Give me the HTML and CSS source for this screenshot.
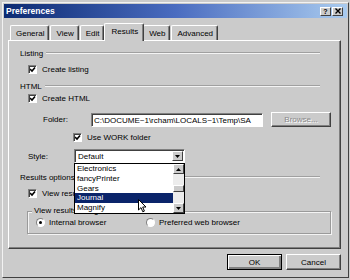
FILE: index.html
```html
<!DOCTYPE html>
<html lang="en">
<head>
  <meta charset="UTF-8">
  <title>Preferences</title>
  <link rel="stylesheet" href="styles.css">
</head>
<body>
  <div class="dialog">
    <!-- Title bar -->
    <div class="titlebar">
      <span class="title">Preferences</span>
      <div class="title-btns">
        <span class="tbtn">?</span>
        <span class="tbtn">
          <svg width="6" height="6" viewBox="0 0 6 6"><path d="M0.5 0.5 L5.5 5.5 M5.5 0.5 L0.5 5.5" stroke="#000" stroke-width="1.4"/></svg>
        </span>
      </div>
    </div>

    <!-- Tabs -->
    <div class="tabs">
      <div class="tab">General</div>
      <div class="tab">View</div>
      <div class="tab">Edit</div>
      <div class="tab active">Results</div>
      <div class="tab">Web</div>
      <div class="tab">Advanced</div>
    </div>

    <!-- Results page -->
    <div class="panel">
      <div class="section s-listing"><span>Listing</span><i class="rule"></i></div>
      <div class="check-row r-create-listing"><span class="box checked"></span>Create listing</div>

      <div class="section s-html"><span>HTML</span><i class="rule"></i></div>
      <div class="check-row r-create-html"><span class="box checked"></span>Create HTML</div>

      <div class="field-row r-folder">
        <span class="folder-label">Folder:</span>
        <span class="textbox">C:\DOCUME~1\rcham\LOCALS~1\Temp\SA</span>
        <span class="btn disabled browse">Browse...</span>
      </div>

      <div class="check-row r-work"><span class="box checked"></span>Use WORK folder</div>

      <div class="field-row r-style">
        <span class="style-label">Style:</span>
        <div class="select-wrap">
          <div class="select">
            <span class="select-text">Default</span>
            <span class="arrow-btn"><svg width="5" height="3" viewBox="0 0 5 3"><polygon points="0,0 5,0 2.5,3" fill="#000"/></svg></span>
          </div>
          <div class="droplist">
            <div class="items">
              <div class="item">Electronics</div>
              <div class="item">fancyPrinter</div>
              <div class="item">Gears</div>
              <div class="item selected">Journal</div>
              <div class="item">Magnify</div>
            </div>
            <div class="scrollbar">
              <span class="arrow-btn"><svg width="5" height="3" viewBox="0 0 5 3"><polygon points="0,3 5,3 2.5,0" fill="#000"/></svg></span>
              <span class="track"><span class="thumb"></span></span>
              <span class="arrow-btn"><svg width="5" height="3" viewBox="0 0 5 3"><polygon points="0,0 5,0 2.5,3" fill="#000"/></svg></span>
            </div>
            <svg class="cursor" width="9" height="14" viewBox="0 0 9 14">
              <path d="M0.5 0.5 L0.5 11 L3 8.6 L4.8 12.8 L6.4 12.1 L4.7 8 L8 8 Z" fill="#fff" stroke="#000" stroke-width="1"/>
            </svg>
          </div>
        </div>
      </div>

      <div class="section s-results"><span>Results options</span><i class="rule"></i></div>
      <div class="check-row r-view"><span class="box checked"></span>View results in browser</div>

      <div class="group">
        <span class="group-label">View results using</span>
        <div class="radio-row">
          <span class="radio-opt first"><span class="radio on"></span>Internal browser</span>
          <span class="radio-opt"><span class="radio"></span>Preferred web browser</span>
        </div>
      </div>
    </div>

    <!-- Buttons -->
    <div class="footer">
      <span class="btn default">OK</span>
      <span class="btn">Cancel</span>
    </div>
  </div>
</body>
</html>
```

FILE: styles.css
```css
* { box-sizing: border-box; }
body {
  margin: 0;
  background: #cbcbcb;
  font-family: "Liberation Sans", Arial, sans-serif;
  font-size: 8px;
  color: #000;
}
.dialog {
  margin: 2px 0 0 2px;
  width: 347px;
  height: 276px;
  border: 1px solid;
  border-color: #f2f2f2 #404040 #404040 #f2f2f2;
  padding: 1px;
  background: #cbcbcb;
}
/* Title bar */
.titlebar {
  height: 14px;
  display: flex;
  align-items: center;
  justify-content: space-between;
  padding: 0 4px 0 2px;
  background: linear-gradient(90deg, #0c2a72, #4a6cc0 50%, #a9cbef);
}
.title {
  color: #fff;
  font-weight: 700;
  font-size: 8.5px;
}
.title-btns {
  display: flex;
  gap: 1px;
}
.tbtn {
  width: 11px;
  height: 9px;
  display: flex;
  align-items: center;
  justify-content: center;
  background: #cbcbcb;
  border: 1px solid;
  border-color: #fff #404040 #404040 #fff;
  font-weight: 700;
  font-size: 7px;
  line-height: 1;
}
/* Tabs */
.tabs {
  margin-top: 5px;
  height: 17px;
  padding-left: 6px;
  display: flex;
  align-items: flex-end;
}
.tab {
  height: 15px;
  padding: 3px 4px 0 5px;
  border: 1px solid;
  border-bottom: none;
  border-color: #fff #404040 #fff #fff;
  border-radius: 2px 2px 0 0;
  box-shadow: inset -1px 0 #808080;
  margin-right: 1px;
  white-space: nowrap;
}
.tab.active {
  height: 18px;
  margin: 0 -1px -1px -1px;
  padding: 3px 5px 0 6px;
  background: #cbcbcb;
  position: relative;
  z-index: 1;
}
/* Panel */
.panel {
  margin: 0 6px 0 4px;
  height: 209px;
  border: 1px solid;
  border-color: #fff #404040 #404040 #fff;
  box-shadow: inset -1px -1px #808080;
  padding: 0 9px 0 11px;
}
.section {
  height: 10px;
  display: flex;
  align-items: center;
  gap: 3px;
}
.rule {
  flex: 1;
  margin-right: 11px;
  height: 2px;
  border-top: 1px solid #a0a0a0;
  border-bottom: 1px solid #f4f4f4;
}
.check-row {
  height: 10px;
  display: flex;
  align-items: center;
  gap: 5px;
  margin-left: 8px;
  white-space: nowrap;
}
.box {
  width: 9px;
  height: 9px;
  background: #fff;
  border: 1px solid;
  border-color: #808080 #fff #fff #808080;
  box-shadow: inset 1px 1px #404040;
}
.box.checked {
  background: #fff url("data:image/svg+xml;utf8,<svg xmlns='http://www.w3.org/2000/svg' width='7' height='7'><polyline points='1,3 3,5 6,1.5' fill='none' stroke='black' stroke-width='1.6'/></svg>") no-repeat 0 0;
}
.field-row {
  display: flex;
  align-items: center;
}
.s-listing { margin-top: 7px; }
.r-create-listing { margin-top: 6px; }
.s-html { margin-top: 7px; }
.r-create-html { margin-top: 2px; }
.r-folder { margin-top: 9px; height: 15px; margin-left: 23px; }
.r-work { margin-top: 5px; margin-left: 53px; }
.r-style { margin-top: 7px; height: 14px; margin-left: 8px; }
.s-results { margin-top: 9px; }
.r-view { margin-top: 6px; }

.folder-label { width: 48px; }
.textbox {
  width: 172px;
  height: 14px;
  padding: 2px 2px 0;
  background: #fff;
  border: 1px solid;
  border-color: #808080 #fff #fff #808080;
  box-shadow: inset 1px 1px #404040;
  white-space: nowrap;
  overflow: hidden;
}
.btn {
  display: flex;
  align-items: center;
  justify-content: center;
  border: 1px solid;
  border-color: #fff #404040 #404040 #fff;
  box-shadow: inset -1px -1px #808080;
  background: #cbcbcb;
}
.browse {
  width: 60px;
  height: 15px;
  margin-left: 8px;
}
.btn.disabled {
  color: #8a8a8a;
  text-shadow: 1px 1px #fff;
}
.style-label { width: 46px; }
.select-wrap {
  position: relative;
  width: 111px;
  height: 14px;
}
.select {
  height: 14px;
  display: flex;
  align-items: center;
  justify-content: space-between;
  background: #fff;
  border: 1px solid;
  border-color: #808080 #fff #fff #808080;
  box-shadow: inset 1px 1px #404040;
  padding: 1px 1px 1px 3px;
}
.arrow-btn {
  width: 11px;
  height: 10px;
  display: flex;
  align-items: center;
  justify-content: center;
  background: #cbcbcb;
  border: 1px solid;
  border-color: #fff #404040 #404040 #fff;
}
.droplist {
  position: absolute;
  top: 100%;
  left: 0;
  width: 111px;
  height: 51px;
  background: #fff;
  border: 1px solid #000;
  display: flex;
  z-index: 5;
}
.items {
  flex: 1;
}
.item {
  height: 9.8px;
  line-height: 9.8px;
  padding-left: 2px;
}
.item.selected {
  background: #0a246a;
  color: #fff;
}
.scrollbar {
  width: 11px;
  display: flex;
  flex-direction: column;
}
.track {
  flex: 1;
  background: #ececec;
  padding-top: 11px;
}
.thumb {
  display: block;
  height: 7px;
  background: #cbcbcb;
  border: 1px solid;
  border-color: #fff #404040 #404040 #fff;
}
.cursor {
  position: absolute;
  left: 63px;
  top: 35px;
}
/* View results using */
.group {
  position: relative;
  margin: 13px 0 0 7px;
  height: 23px;
  border: 1px solid #9a9a9a;
  box-shadow: inset 1px 1px #f4f4f4, 1px 1px #f4f4f4;
  display: flex;
  align-items: center;
  padding-left: 8px;
}
.group-label {
  position: absolute;
  top: -6px;
  left: 4px;
  padding: 0 2px;
  background: #cbcbcb;
}
.radio-row {
  display: flex;
  align-items: center;
}
.radio-opt {
  display: flex;
  align-items: center;
  gap: 4px;
  white-space: nowrap;
}
.radio-opt.first { width: 110px; }
.radio {
  width: 9px;
  height: 9px;
  border-radius: 50%;
  background: #fff;
  border: 1px solid;
  border-color: #808080 #fff #fff #808080;
  display: flex;
  align-items: center;
  justify-content: center;
}
.radio.on::after {
  content: "";
  width: 3px;
  height: 3px;
  border-radius: 50%;
  background: #000;
}
/* Footer */
.footer {
  margin-top: 5px;
  padding-right: 6px;
  display: flex;
  justify-content: flex-end;
  gap: 4px;
}
.footer .btn {
  width: 55px;
  height: 16px;
}
.btn.default {
  border-color: #000;
  box-shadow: inset 1px 1px #fff, inset -2px -2px #808080;
}
```
